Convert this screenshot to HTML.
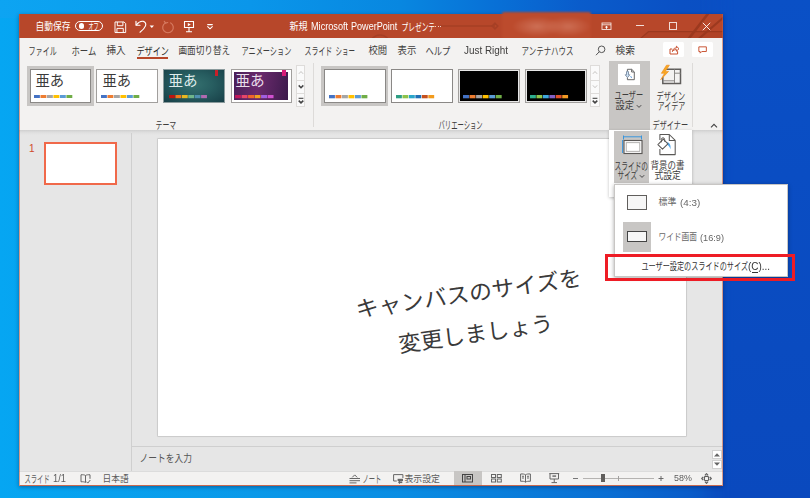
<!DOCTYPE html>
<html lang="ja"><head><meta charset="utf-8"><title>PowerPoint</title><style>
html,body{margin:0;padding:0;}
body{width:810px;height:498px;overflow:hidden;position:relative;font-family:"Liberation Sans",sans-serif;background:#0a62d0;}
#root{position:absolute;left:0;top:0;width:810px;height:498px;overflow:hidden;}
#root>div,#root>svg,#root>span{position:absolute;box-sizing:border-box;}
#desk{left:0;top:0;width:810px;height:498px;
 background:linear-gradient(90deg,#06a6f2 0px,#08a0ee 120px,#0a99e9 250px,#0a8de3 400px,#0a7cda 520px,#0a6ed3 610px,#0a5cc9 690px,#0a4abd 735px,#0a44b8 810px);}
#desktop-top{left:0;top:0;width:810px;height:18px;
 background:linear-gradient(90deg,#0da4f2 0px,#0b9fee 120px,#0a96ea 250px,#0887e0 400px,#086fd6 500px,#0a5ccb 580px,#0a50c4 680px,#0a4cc2 810px);}
#desktop-right{left:700px;top:0;width:110px;height:498px;
 background:linear-gradient(180deg,#0a50c6 0%,#0a4dc3 35%,#0a4bc0 70%,#0a49be 100%);
 -webkit-mask-image:linear-gradient(90deg,transparent 0px,#000 36px);mask-image:linear-gradient(90deg,transparent 0px,#000 36px);}
svg.t,svg.i{overflow:visible;display:block;}
svg.t text{font-family:"Liberation Sans","Noto Sans CJK JP",sans-serif;}
span.l{white-space:nowrap;display:block;}
</style></head>
<body><div id="root">
<div id="desk"></div><div id="desktop-top"></div><div id="desktop-right"></div>
<div style="left:19px;top:14px;width:704px;height:472px;background:#e6e6e6;box-shadow:0 1px 4px rgba(0,0,40,.38);"></div>
<div style="left:19px;top:14px;width:704px;height:24px;background:#b7472a;"></div>
<svg class="i" style="left:19px;top:14px;overflow:hidden" width="704" height="24" viewBox="0 0 704 24" ><g fill="none" stroke="#a53f25" stroke-width="1.6" opacity=".9"><path d="M421 12H476"/><path d="M476 9.2l2.8 2.8-2.8 2.8-2.8-2.800z"/><circle cx="361" cy="31" r="10"/><circle cx="403" cy="37" r="9"/></g><path d="M622 24.500L629.500 17.700H705V24.500z" fill="#8e3218" opacity=".16"/><g fill="none" stroke="#9a381e" opacity=".9"><path d="M621.500 24.500L629.500 17.700H705" stroke-width="1.200"/><path d="M669.500 25L689.500 -1" stroke-width="2.600"/><path d="M679.500 25L705 3" stroke-width="2.200"/></g></svg>
<div style="left:501.5px;top:12px;width:89px;height:26.6px;background:radial-gradient(ellipse 25px 10px at 35px 14.5px,rgba(216,134,110,.62),rgba(216,134,110,0) 100%),radial-gradient(ellipse 23px 10px at 66px 14.5px,rgba(216,134,110,.58),rgba(216,134,110,0) 100%),#bc4b2d;filter:blur(.8px);border-radius:2px;"></div>
<svg class="t" style="left:35.2px;top:20.12px" width="35.9" height="13.23" viewBox="0 0 35.9 13.23" role="img" aria-label="自動保存"><title>自動保存</title><text x="0.5" y="9.8" font-size="9.8" fill="#fff" textLength="34.9" lengthAdjust="spacingAndGlyphs">自動保存</text></svg>
<div style="left:75.4px;top:20.8px;width:27.8px;height:10.7px;border:1px solid #fff;border-radius:6px;"></div>
<div style="left:78.5px;top:23.4px;width:5.4px;height:5.4px;background:#fff;border-radius:50%;"></div>
<svg class="t" style="left:88.3px;top:21.37px" width="11.2" height="11.61" viewBox="0 0 11.2 11.61" role="img" aria-label="オフ"><title>オフ</title><text x="0.5" y="8.6" font-size="8.6" fill="#fff" textLength="10.2" lengthAdjust="spacingAndGlyphs">オフ</text></svg>
<svg class="i" style="left:113.7px;top:20.5px;" width="12.6" height="12.5" viewBox="0 0 13 13" ><g fill="none" stroke="#fff" stroke-width="1"><path d="M1 1h9.4l1.7 1.700v9.300H1z"/><path d="M3.400 1v3.900h5.800V1"/><path d="M3 12V7.700h6.600V12"/></g></svg>
<svg class="i" style="left:134px;top:20px;" width="21" height="14" viewBox="0 0 21 14" ><g fill="none" stroke="#fff" stroke-width="1.150" stroke-linecap="round" stroke-linejoin="round"><path d="M2 1.300v3.900h4"/><path d="M2.400 4.800C4.500 2.300 7.200.9 9.300 1.400c2 .5 3 2.300 2.200 4.500C10.600 8.300 8.500 10.400 6 12.200"/></g><path d="M15.600 5.600h4.400l-2.200 2.300z" fill="#fff"/></svg>
<svg class="i" style="left:161px;top:20px;" width="14" height="14" viewBox="0 0 14 14" ><g fill="none" stroke="#d67a60" stroke-width="1.200" stroke-linecap="round" stroke-linejoin="round"><path d="M9.700 2.900A5.300 5.300 0 1 1 4.300 2.900"/><path d="M3.300 1.300l1.300 1.800 2.100-.6"/></g></svg>
<svg class="i" style="left:183px;top:20px;" width="12" height="13" viewBox="0 0 12 13" ><g fill="none" stroke="#fff" stroke-width="1.1"><path d="M1 1.500h10M1.500 1.500v6h9v-6"/><path d="M6 7.500v4.100M3 11.700h6"/></g><path d="M4.800 2.900l3 1.700-3 1.700z" fill="#fff"/></svg>
<svg class="i" style="left:205.5px;top:23px;" width="8" height="7" viewBox="0 0 8 7" ><g fill="none" stroke="#fff" stroke-width="1.1" stroke-linecap="round"><path d="M1.700 1.600h4.600"/><path d="M1.700 3.700l2.300 2.100 2.300-2.100"/></g></svg>
<svg class="t" style="left:288.9px;top:20.12px" width="19.2" height="13.23" viewBox="0 0 19.2 13.23" role="img" aria-label="新規"><title>新規</title><text x="0.5" y="9.8" font-size="9.8" fill="#fff" textLength="18.2" lengthAdjust="spacingAndGlyphs">新規</text></svg>
<span class="l" style="left:310.5px;top:20.04px;font-size:10.5px;line-height:12.6px;color:#fff;font-weight:normal;transform:scaleX(0.8703);transform-origin:0 0;">Microsoft</span>
<span class="l" style="left:351.4px;top:20.04px;font-size:10.5px;line-height:12.6px;color:#fff;font-weight:normal;transform:scaleX(0.8631);transform-origin:0 0;">PowerPoint</span>
<svg class="t" style="left:400.6px;top:19.57px" width="34.6" height="14.43" viewBox="0 0 34.6 14.43" role="img" aria-label="プレゼンテ"><title>プレゼンテ</title><text x="0.5" y="10.69" font-size="10.69" fill="#fff" textLength="33.6" lengthAdjust="spacingAndGlyphs">プレゼンテ</text></svg>
<div style="left:435.4px;top:26px;width:1px;height:1px;background:#f0cfc6;"></div>
<div style="left:437.7px;top:26px;width:1px;height:1px;background:#f0cfc6;"></div>
<div style="left:440px;top:26px;width:1px;height:1px;background:#f0cfc6;"></div>
<svg class="i" style="left:601px;top:22px;" width="11" height="8.5" viewBox="0 0 11 8.500" ><g fill="none" stroke="#fff" stroke-opacity=".85" stroke-width=".9"><rect x="1" y="1" width="9" height="6.500"/><path d="M1 2.800h9"/></g><path d="M5.500 3.700l1.800 1.700h-1.300v1.300h-1v-1.300h-1.300z" fill="#fff"/></svg>
<div style="left:636px;top:25.2px;width:7.8px;height:1px;background:rgba(255,255,255,.82);"></div>
<div style="left:669.3px;top:22.2px;width:8px;height:7.6px;border:1px solid rgba(255,255,255,.8);"></div>
<svg class="i" style="left:702px;top:21.5px;" width="9" height="9" viewBox="0 0 9 9" ><path d="M.8.800l7.400 7.400M8.200.800L.8 8.200" stroke="#fff" stroke-opacity=".88" stroke-width="1" fill="none"/></svg>
<div style="left:19px;top:38px;width:704px;height:93px;background:#f3f2f1;"></div>
<svg class="t" style="left:27.8px;top:43.7px" width="29.3" height="14.58" viewBox="0 0 29.3 14.58" role="img" aria-label="ファイル"><title>ファイル</title><text x="0.5" y="10.8" font-size="10.8" fill="#3e3d3c" textLength="28.3" lengthAdjust="spacingAndGlyphs">ファイル</text></svg>
<svg class="t" style="left:71.3px;top:43.7px" width="25.8" height="14.58" viewBox="0 0 25.8 14.58" role="img" aria-label="ホーム"><title>ホーム</title><text x="0.5" y="10.8" font-size="10.8" fill="#3e3d3c" textLength="24.8" lengthAdjust="spacingAndGlyphs">ホーム</text></svg>
<svg class="t" style="left:106.2px;top:44.2px" width="20.2" height="13.5" viewBox="0 0 20.2 13.5" role="img" aria-label="挿入"><title>挿入</title><text x="0.5" y="10" font-size="10" fill="#3e3d3c" textLength="19.2" lengthAdjust="spacingAndGlyphs">挿入</text></svg>
<svg class="t" style="left:135.8px;top:43.7px" width="33.5" height="14.58" viewBox="0 0 33.5 14.58" role="img" aria-label="デザイン"><title>デザイン</title><text x="0.5" y="10.8" font-size="10.8" fill="#2b2a29" textLength="32.5" lengthAdjust="spacingAndGlyphs">デザイン</text></svg>
<div style="left:136.6px;top:57.2px;width:31.9px;height:1.8px;background:#b7472a;"></div>
<svg class="t" style="left:178.3px;top:44.2px" width="52.7" height="13.5" viewBox="0 0 52.7 13.5" role="img" aria-label="画面切り替え"><title>画面切り替え</title><text x="0.5" y="10" font-size="10" fill="#3e3d3c" textLength="51.7" lengthAdjust="spacingAndGlyphs">画面切り替え</text></svg>
<svg class="t" style="left:241.2px;top:43.7px" width="50.9" height="14.58" viewBox="0 0 50.9 14.58" role="img" aria-label="アニメーション"><title>アニメーション</title><text x="0.5" y="10.8" font-size="10.8" fill="#3e3d3c" textLength="49.9" lengthAdjust="spacingAndGlyphs">アニメーション</text></svg>
<svg class="t" style="left:304.3px;top:43.7px" width="28.8" height="14.58" viewBox="0 0 28.8 14.58" role="img" aria-label="スライド"><title>スライド</title><text x="0.5" y="10.8" font-size="10.8" fill="#3e3d3c" textLength="27.8" lengthAdjust="spacingAndGlyphs">スライド</text></svg>
<svg class="t" style="left:335.1px;top:43.7px" width="20.4" height="14.58" viewBox="0 0 20.4 14.58" role="img" aria-label="ショー"><title>ショー</title><text x="0.5" y="10.8" font-size="10.8" fill="#3e3d3c" textLength="19.4" lengthAdjust="spacingAndGlyphs">ショー</text></svg>
<svg class="t" style="left:368.3px;top:44.2px" width="19.7" height="13.5" viewBox="0 0 19.7 13.5" role="img" aria-label="校閲"><title>校閲</title><text x="0.5" y="10" font-size="10" fill="#3e3d3c" textLength="18.7" lengthAdjust="spacingAndGlyphs">校閲</text></svg>
<svg class="t" style="left:397.2px;top:44.2px" width="19.8" height="13.5" viewBox="0 0 19.8 13.5" role="img" aria-label="表示"><title>表示</title><text x="0.5" y="10" font-size="10" fill="#3e3d3c" textLength="18.8" lengthAdjust="spacingAndGlyphs">表示</text></svg>
<svg class="t" style="left:425.2px;top:43.7px" width="25.8" height="14.58" viewBox="0 0 25.8 14.58" role="img" aria-label="ヘルプ"><title>ヘルプ</title><text x="0.5" y="10.8" font-size="10.8" fill="#3e3d3c" textLength="24.8" lengthAdjust="spacingAndGlyphs">ヘルプ</text></svg>
<span class="l" style="left:463.5px;top:44.53px;font-size:10px;line-height:12px;color:#3e3d3c;font-weight:normal;transform:scaleX(0.9910);transform-origin:0 0;">Just Right</span>
<svg class="t" style="left:521.2px;top:43.7px" width="53.1" height="14.58" viewBox="0 0 53.1 14.58" role="img" aria-label="アンテナハウス"><title>アンテナハウス</title><text x="0.5" y="10.8" font-size="10.8" fill="#3e3d3c" textLength="52.1" lengthAdjust="spacingAndGlyphs">アンテナハウス</text></svg>
<svg class="i" style="left:595px;top:45px;" width="11" height="11" viewBox="0 0 11 11" ><g fill="none" stroke="#555" stroke-width="1"><circle cx="6.600" cy="4.300" r="3.300"/><path d="M4.300 6.700L1 10.200"/></g></svg>
<svg class="t" style="left:615px;top:44.2px" width="20.4" height="13.5" viewBox="0 0 20.4 13.5" role="img" aria-label="検索"><title>検索</title><text x="0.5" y="10" font-size="10" fill="#3e3d3c" textLength="19.4" lengthAdjust="spacingAndGlyphs">検索</text></svg>
<div style="left:663px;top:42px;width:21px;height:14.7px;background:#fff;border-radius:1.5px;"></div>
<div style="left:691.5px;top:42px;width:21.5px;height:14.7px;background:#fff;border-radius:1.5px;"></div>
<svg class="i" style="left:668px;top:44px;" width="12" height="11" viewBox="0 0 12 11" ><g fill="none" stroke="#c8502f" stroke-width="1" stroke-linejoin="round"><path d="M4.200 5H2v5h7.600V7.200"/><path d="M4.400 7.600c.2-2.200 1.500-3.600 4-3.700V2.200l2.600 2.500-2.600 2.500V5.600c-1.800 0-3 .5-4 2z"/></g></svg>
<svg class="i" style="left:698px;top:45.8px;" width="9.2" height="8.8" viewBox="0 0 11 10.500" ><g fill="none" stroke="#c8502f" stroke-width="1.150" stroke-linejoin="round"><path d="M1 1h9v5.600H4.500L2.600 8.500V6.600H1z"/></g></svg>
<div style="left:26.5px;top:66.3px;width:67.3px;height:40.2px;background:#c8c6c4;"></div>
<div style="left:29.7px;top:69.2px;width:61.5px;height:34.1px;background:#fff;border:1px solid #8a8886;"></div>
<svg class="t" style="left:34.7px;top:71.91px" width="29.7" height="19.58" viewBox="0 0 29.7 19.58" role="img" aria-label="亜あ"><title>亜あ</title><text x="0.5" y="14.5" font-size="14.5" fill="#3a3a3a" textLength="28.7" lengthAdjust="spacingAndGlyphs">亜あ</text></svg>
<svg class="i" style="left:34.4px;top:95.2px;" width="38.3" height="3" viewBox="0 0 38.3 3" ><rect x="0" y="0" width="5.88" height="3" fill="#4472c4"/><rect x="6.48" y="0" width="5.88" height="3" fill="#ed7d31"/><rect x="12.97" y="0" width="5.88" height="3" fill="#a5a5a5"/><rect x="19.45" y="0" width="5.88" height="3" fill="#ffc000"/><rect x="25.93" y="0" width="5.88" height="3" fill="#5b9bd5"/><rect x="32.42" y="0" width="5.88" height="3" fill="#70ad47"/></svg>
<div style="left:96.4px;top:69.2px;width:61.3px;height:34.1px;background:#fff;border:1px solid #a19f9d;"></div>
<svg class="t" style="left:101.6px;top:71.91px" width="29.7" height="19.58" viewBox="0 0 29.7 19.58" role="img" aria-label="亜あ"><title>亜あ</title><text x="0.5" y="14.5" font-size="14.5" fill="#3a3a3a" textLength="28.7" lengthAdjust="spacingAndGlyphs">亜あ</text></svg>
<svg class="i" style="left:101.3px;top:95.2px;" width="38.3" height="3" viewBox="0 0 38.3 3" ><rect x="0" y="0" width="5.88" height="3" fill="#4472c4"/><rect x="6.48" y="0" width="5.88" height="3" fill="#ed7d31"/><rect x="12.97" y="0" width="5.88" height="3" fill="#a5a5a5"/><rect x="19.45" y="0" width="5.88" height="3" fill="#ffc000"/><rect x="25.93" y="0" width="5.88" height="3" fill="#5b9bd5"/><rect x="32.42" y="0" width="5.88" height="3" fill="#70ad47"/></svg>
<div style="left:163.3px;top:69.2px;width:61.4px;height:34.1px;background:radial-gradient(ellipse at 50% 45%,#34706f 0%,#275d60 45%,#173f47 100%);border:1px solid #8a9a9c;"></div>
<div style="left:214.9px;top:70.2px;width:3.4px;height:5.6px;background:#c8202a;"></div>
<svg class="t" style="left:167.8px;top:71.91px" width="30.2" height="19.58" viewBox="0 0 30.2 19.58" role="img" aria-label="亜あ"><title>亜あ</title><text x="0.5" y="14.5" font-size="14.5" fill="#dfeceb" textLength="29.2" lengthAdjust="spacingAndGlyphs">亜あ</text></svg>
<svg class="i" style="left:168.8px;top:95px;" width="38" height="3.2" viewBox="0 0 38 3.2" ><rect x="0" y="0" width="5.83" height="3.2" fill="#c0140f"/><rect x="6.43" y="0" width="5.83" height="3.2" fill="#f07a1c"/><rect x="12.87" y="0" width="5.83" height="3.2" fill="#e8b820"/><rect x="19.3" y="0" width="5.83" height="3.2" fill="#6fb58a"/><rect x="25.73" y="0" width="5.83" height="3.2" fill="#4f8fb0"/><rect x="32.17" y="0" width="5.83" height="3.2" fill="#b06ab0"/></svg>
<div style="left:230.5px;top:69.2px;width:61.4px;height:34.1px;background:#fff;border:1px solid #a19f9d;"></div>
<div style="left:234px;top:72.2px;width:54.4px;height:27.8px;background:linear-gradient(100deg,#4a1f58 0%,#6a2a6c 45%,#3c1a4c 100%);"></div>
<div style="left:282px;top:70.2px;width:3.5px;height:5.6px;background:#d81b78;"></div>
<svg class="t" style="left:235.2px;top:71.91px" width="30.3" height="19.58" viewBox="0 0 30.3 19.58" role="img" aria-label="亜あ"><title>亜あ</title><text x="0.5" y="14.5" font-size="14.5" fill="#eadfea" textLength="29.3" lengthAdjust="spacingAndGlyphs">亜あ</text></svg>
<svg class="i" style="left:235.4px;top:95px;" width="38.6" height="3.2" viewBox="0 0 38.6 3.2" ><rect x="0" y="0" width="5.93" height="3.2" fill="#c2185b"/><rect x="6.53" y="0" width="5.93" height="3.2" fill="#e8456a"/><rect x="13.07" y="0" width="5.93" height="3.2" fill="#f0642c"/><rect x="19.6" y="0" width="5.93" height="3.2" fill="#f0a020"/><rect x="26.13" y="0" width="5.93" height="3.2" fill="#a060e0"/><rect x="32.67" y="0" width="5.93" height="3.2" fill="#d050d0"/></svg>
<div style="left:295.6px;top:64.8px;width:9.8px;height:42.6px;background:#fafafa;border:1px solid #dedcda;"></div>
<div style="left:295.6px;top:79.6px;width:9.8px;height:1px;background:#dedcda;"></div>
<div style="left:295.6px;top:93.2px;width:9.8px;height:1px;background:#dedcda;"></div>
<svg class="i" style="left:297.5px;top:70px;" width="6" height="5" viewBox="0 0 6 5" ><path d="M.9 3.800L3 1.500 5.100 3.800" fill="none" stroke="#c6c4c2" stroke-width="1"/></svg>
<svg class="i" style="left:297.5px;top:84.3px;" width="6" height="5" viewBox="0 0 6 5" ><path d="M.7 1.400L3 3.700 5.300 1.400" fill="none" stroke="#444" stroke-width="1.500"/></svg>
<svg class="i" style="left:297.5px;top:96.8px;" width="6" height="7.5" viewBox="0 0 6 7.500" ><path d="M.6 1.300h4.800" stroke="#444" stroke-width="1.100" fill="none"/><path d="M.7 3.600L3 5.900 5.300 3.600" fill="none" stroke="#444" stroke-width="1.500"/></svg>
<svg class="t" style="left:155px;top:118.1px" width="21.7" height="14.58" viewBox="0 0 21.7 14.58" role="img" aria-label="テーマ"><title>テーマ</title><text x="0.5" y="10.8" font-size="10.8" fill="#3e3d3c" textLength="20.7" lengthAdjust="spacingAndGlyphs">テーマ</text></svg>
<div style="left:313.3px;top:63px;width:1px;height:64px;background:#dddbd9;"></div>
<div style="left:321.3px;top:66.3px;width:66.9px;height:40.2px;background:#c8c6c4;"></div>
<div style="left:324.1px;top:69.2px;width:61.6px;height:34.1px;background:#fff;border:1px solid #8a8886;"></div>
<svg class="i" style="left:329.2px;top:95.2px;" width="38.4" height="3.3" viewBox="0 0 38.4 3.3" ><rect x="0" y="0" width="5.9" height="3.3" fill="#4472c4"/><rect x="6.5" y="0" width="5.9" height="3.3" fill="#ed7d31"/><rect x="13" y="0" width="5.9" height="3.3" fill="#a5a5a5"/><rect x="19.5" y="0" width="5.9" height="3.3" fill="#ffc000"/><rect x="26" y="0" width="5.9" height="3.3" fill="#5b9bd5"/><rect x="32.5" y="0" width="5.9" height="3.3" fill="#70ad47"/></svg>
<div style="left:391.3px;top:69.2px;width:61.4px;height:34.1px;background:#fff;border:1px solid #8a8886;"></div>
<svg class="i" style="left:396.2px;top:95.2px;" width="38.2" height="3.3" viewBox="0 0 38.2 3.3" ><rect x="0" y="0" width="5.87" height="3.3" fill="#2e9e83"/><rect x="6.47" y="0" width="5.87" height="3.3" fill="#8dc34a"/><rect x="12.93" y="0" width="5.87" height="3.3" fill="#2aa6ca"/><rect x="19.4" y="0" width="5.87" height="3.3" fill="#1f6fb5"/><rect x="25.87" y="0" width="5.87" height="3.3" fill="#c5501d"/><rect x="32.33" y="0" width="5.87" height="3.3" fill="#f29b1d"/></svg>
<div style="left:458.4px;top:69.2px;width:61.4px;height:34.1px;background:#000;border:1px solid #a19f9d;box-shadow:inset 0 0 0 1px #e8e8e8;"></div>
<svg class="i" style="left:463.2px;top:95.2px;" width="38.7" height="3.3" viewBox="0 0 38.7 3.3" ><rect x="0" y="0" width="5.95" height="3.3" fill="#4472c4"/><rect x="6.55" y="0" width="5.95" height="3.3" fill="#ed7d31"/><rect x="13.1" y="0" width="5.95" height="3.3" fill="#a5a5a5"/><rect x="19.65" y="0" width="5.95" height="3.3" fill="#ffc000"/><rect x="26.2" y="0" width="5.95" height="3.3" fill="#5b9bd5"/><rect x="32.75" y="0" width="5.95" height="3.3" fill="#70ad47"/></svg>
<div style="left:525px;top:69.2px;width:62px;height:34.1px;background:#000;border:1px solid #a19f9d;box-shadow:inset 0 0 0 1px #e8e8e8;"></div>
<svg class="i" style="left:530.4px;top:95.2px;" width="38.1" height="3.3" viewBox="0 0 38.1 3.3" ><rect x="0" y="0" width="5.85" height="3.3" fill="#2eae8d"/><rect x="6.45" y="0" width="5.85" height="3.3" fill="#8fc54b"/><rect x="12.9" y="0" width="5.85" height="3.3" fill="#3fa7dd"/><rect x="19.35" y="0" width="5.85" height="3.3" fill="#8360c6"/><rect x="25.8" y="0" width="5.85" height="3.3" fill="#e0502a"/><rect x="32.25" y="0" width="5.85" height="3.3" fill="#f29a24"/></svg>
<div style="left:590.4px;top:64.8px;width:9.8px;height:42.6px;background:#fafafa;border:1px solid #dedcda;"></div>
<div style="left:590.4px;top:79.6px;width:9.8px;height:1px;background:#dedcda;"></div>
<div style="left:590.4px;top:93.2px;width:9.8px;height:1px;background:#dedcda;"></div>
<svg class="i" style="left:592.3px;top:70px;" width="6" height="5" viewBox="0 0 6 5" ><path d="M.9 3.800L3 1.500 5.100 3.800" fill="none" stroke="#c6c4c2" stroke-width="1"/></svg>
<svg class="i" style="left:592.3px;top:84.3px;" width="6" height="5" viewBox="0 0 6 5" ><path d="M.9 1.400L3 3.700 5.100 1.400" fill="none" stroke="#c6c4c2" stroke-width="1"/></svg>
<svg class="i" style="left:592.3px;top:96.8px;" width="6" height="7.5" viewBox="0 0 6 7.500" ><path d="M.6 1.300h4.800" stroke="#444" stroke-width="1.100" fill="none"/><path d="M.7 3.600L3 5.900 5.300 3.600" fill="none" stroke="#444" stroke-width="1.500"/></svg>
<svg class="t" style="left:438.3px;top:118.1px" width="45.2" height="14.58" viewBox="0 0 45.2 14.58" role="img" aria-label="バリエーション"><title>バリエーション</title><text x="0.5" y="10.8" font-size="10.8" fill="#3e3d3c" textLength="44.2" lengthAdjust="spacingAndGlyphs">バリエーション</text></svg>
<div style="left:608.5px;top:61px;width:41.5px;height:68.5px;background:#c8c6c4;"></div>
<div style="left:618.3px;top:64px;width:22.1px;height:21.4px;background:#fff;"></div>
<svg class="i" style="left:623.5px;top:67.5px;" width="11" height="13" viewBox="0 0 11 13" ><g fill="none" stroke="#5a5a5a" stroke-width=".9" stroke-linejoin="round"><path d="M3.400 3.200V1.300h4.300l2.600 2.600v7.800H3.400v-2.200"/><path d="M7.600 1.400v2.600h2.600"/></g><path d="M2.500 3.600h2v3.200h1.300L3.500 9.600 1.200 6.800h1.300z" fill="#cfe3f7" stroke="#6b7f95" stroke-width=".8" stroke-linejoin="round"/><path d="M6.400 8.600l1.600.9" stroke="#3a86d6" stroke-width=".9" fill="none"/></svg>
<svg class="t" style="left:614.4px;top:88.1px" width="29.6" height="14.58" viewBox="0 0 29.6 14.58" role="img" aria-label="ユーザー"><title>ユーザー</title><text x="0.5" y="10.8" font-size="10.8" fill="#3e3d3c" textLength="28.6" lengthAdjust="spacingAndGlyphs">ユーザー</text></svg>
<svg class="t" style="left:615px;top:99px" width="19.5" height="13.5" viewBox="0 0 19.5 13.5" role="img" aria-label="設定"><title>設定</title><text x="0.5" y="10" font-size="10" fill="#3e3d3c" textLength="18.5" lengthAdjust="spacingAndGlyphs">設定</text></svg>
<svg class="i" style="left:636px;top:103.5px;" width="6" height="4.5" viewBox="0 0 6 4.500" ><path d="M.8 1.200L3 3.400 5.200 1.200" fill="none" stroke="#444" stroke-width="1"/></svg>
<svg class="i" style="left:659px;top:64.5px;" width="23" height="20.5" viewBox="0 0 23 20.500" ><g fill="none" stroke="#605e5c" stroke-width="1.500"><path d="M5.500 4.300H21.500V18.500H3.800V12"/></g><g fill="none" stroke="#8a8886" stroke-width="1"><path d="M15.500 4.500V18M15.500 8.200h6M4 15.800h11.500"/></g><path d="M7.500.2L2.300 8.300h3.200L1.700 14.800 9.600 6.400H6.300L10.400.2z" fill="#f7a823" stroke="#f08a1a" stroke-width=".6"/></svg>
<svg class="t" style="left:656.2px;top:88.7px" width="29.7" height="14.58" viewBox="0 0 29.7 14.58" role="img" aria-label="デザイン"><title>デザイン</title><text x="0.5" y="10.8" font-size="10.8" fill="#3e3d3c" textLength="28.7" lengthAdjust="spacingAndGlyphs">デザイン</text></svg>
<svg class="t" style="left:657px;top:98.8px" width="28.9" height="14.58" viewBox="0 0 28.9 14.58" role="img" aria-label="アイデア"><title>アイデア</title><text x="0.5" y="10.8" font-size="10.8" fill="#3e3d3c" textLength="27.9" lengthAdjust="spacingAndGlyphs">アイデア</text></svg>
<svg class="t" style="left:651.9px;top:117.6px" width="36.6" height="14.58" viewBox="0 0 36.6 14.58" role="img" aria-label="デザイナー"><title>デザイナー</title><text x="0.5" y="10.8" font-size="10.8" fill="#3e3d3c" textLength="35.6" lengthAdjust="spacingAndGlyphs">デザイナー</text></svg>
<div style="left:691.7px;top:63px;width:1px;height:64px;background:#dddbd9;"></div>
<svg class="i" style="left:709.5px;top:122.5px;" width="8" height="5.5" viewBox="0 0 8 5.500" ><path d="M1 4.300L4 1.300 7 4.300" fill="none" stroke="#444" stroke-width="1.100"/></svg>
<div style="left:19px;top:130.5px;width:704px;height:340.5px;background:#e6e6e6;"></div>
<div style="left:19px;top:129.8px;width:704px;height:5.2px;background:linear-gradient(180deg,#cfcfcf 0%,#d8d8d8 25%,#e1e1e1 60%,#e6e6e6 100%);"></div>
<span class="l" style="left:29px;top:142.5px;font-size:10px;line-height:12px;color:#d04a2a;">1</span>
<div style="left:44px;top:142.4px;width:73px;height:43px;background:#fff;border:2px solid #f0694a;"></div>
<div style="left:131.3px;top:133px;width:1px;height:338px;background:#cfcfcf;"></div>
<div style="left:157.6px;top:138.6px;width:528.6px;height:297.8px;background:#fff;box-shadow:0 0 0 .6px #c2c2c2,0 0 2px rgba(0,0,0,.15);"></div>
<div style="left:132.3px;top:446.2px;width:590.7px;height:1px;background:#cfcfcf;"></div>
<svg class="t" style="left:139.3px;top:452.19px" width="53.4" height="14.18" viewBox="0 0 53.4 14.18" role="img" aria-label="ノートを入力"><title>ノートを入力</title><text x="0.5" y="10.5" font-size="10.5" fill="#555" textLength="52.4" lengthAdjust="spacingAndGlyphs">ノートを入力</text></svg>
<div style="left:711.7px;top:450px;width:10px;height:8.8px;background:#fff;border:1px solid #d0d0d0;"></div>
<div style="left:711.7px;top:459.8px;width:10px;height:8.8px;background:#fff;border:1px solid #d0d0d0;"></div>
<svg class="i" style="left:713.7px;top:452.5px;" width="6" height="4" viewBox="0 0 6 4" ><path d="M0 3.600L3 .2 6 3.600z" fill="#666"/></svg>
<svg class="i" style="left:713.7px;top:462.3px;" width="6" height="4" viewBox="0 0 6 4" ><path d="M0 .4L3 3.800 6 .4z" fill="#666"/></svg>
<svg class="t" style="left:0;top:0" width="810" height="498" viewBox="0 0 810 498" role="img" aria-label="キャンバスのサイズを"><title>キャンバスのサイズを</title><g transform="translate(468.7 293.1) rotate(-8.1)"><text x="0" y="8.36" font-size="22" fill="#3a3a3a" text-anchor="middle" textLength="228" lengthAdjust="spacingAndGlyphs">キャンバスのサイズを</text></g></svg>
<svg class="t" style="left:0;top:0" width="810" height="498" viewBox="0 0 810 498" role="img" aria-label="変更しましょう"><title>変更しましょう</title><g transform="translate(475.7 333.2) rotate(-8.1)"><text x="0" y="8.36" font-size="22" fill="#3a3a3a" text-anchor="middle" textLength="156" lengthAdjust="spacingAndGlyphs">変更しましょう</text></g></svg>
<div style="left:19px;top:470.5px;width:704px;height:15.5px;background:#f3f2f1;border-top:1px solid #dcdcdc;"></div>
<svg class="t" style="left:24px;top:471.94px" width="26.2" height="14.29" viewBox="0 0 26.2 14.29" role="img" aria-label="スライド"><title>スライド</title><text x="0.5" y="10.58" font-size="10.58" fill="#5c5c5c" textLength="25.2" lengthAdjust="spacingAndGlyphs">スライド</text></svg>
<span class="l" style="left:52.8px;top:472.64px;font-size:10px;line-height:12px;color:#5c5c5c;font-weight:normal;transform:scaleX(0.9281);transform-origin:0 0;">1/1</span>
<svg class="i" style="left:80px;top:474px;" width="11" height="10" viewBox="0 0 11 10" ><g fill="none" stroke="#666" stroke-width="1"><path d="M5.500 1.500C4.500.8 2.800.6 1 .8v7c1.800-.2 3.500 0 4.500.7V1.500c1-.7 2.700-.9 4.500-.7v4"/><path d="M6.300 7.600l1.500 1.500L10.300 6"/></g></svg>
<svg class="t" style="left:101.9px;top:472.61px" width="27.1" height="12.83" viewBox="0 0 27.1 12.83" role="img" aria-label="日本語"><title>日本語</title><text x="0.5" y="9.5" font-size="9.5" fill="#5c5c5c" textLength="26.1" lengthAdjust="spacingAndGlyphs">日本語</text></svg>
<svg class="i" style="left:348.5px;top:473.5px;" width="11.5" height="9.5" viewBox="0 0 11.500 9.500" ><g fill="none" stroke="#666" stroke-width="1"><path d="M.5 4.500h10.500M.5 6.700h10.500M.5 8.900h7"/><path d="M3.200 3.400L5.700.9 8.200 3.400"/></g></svg>
<svg class="t" style="left:361.6px;top:471.94px" width="19.8" height="14.29" viewBox="0 0 19.8 14.29" role="img" aria-label="ノート"><title>ノート</title><text x="0.5" y="10.58" font-size="10.58" fill="#5c5c5c" textLength="18.8" lengthAdjust="spacingAndGlyphs">ノート</text></svg>
<svg class="i" style="left:393px;top:473.5px;" width="10.5" height="10" viewBox="0 0 10.500 10" ><g fill="none" stroke="#666" stroke-width="1"><path d="M3.800 7H.6V.6h9.300V4"/></g><g fill="#666"><rect x="4.600" y="4.800" width="5.400" height="2.200"/><rect x="5.300" y="7.400" width="4" height="1.700"/><rect x="6" y="5.200" width="1" height="4.500"/></g></svg>
<svg class="t" style="left:403.7px;top:472.61px" width="36.4" height="12.83" viewBox="0 0 36.4 12.83" role="img" aria-label="表示設定"><title>表示設定</title><text x="0.5" y="9.5" font-size="9.5" fill="#5c5c5c" textLength="35.4" lengthAdjust="spacingAndGlyphs">表示設定</text></svg>
<div style="left:453.5px;top:471px;width:28.5px;height:15px;background:#c8c6c4;"></div>
<svg class="i" style="left:462px;top:474px;" width="11" height="8.5" viewBox="0 0 11 8.500" ><g fill="none" stroke="#444" stroke-width="1"><rect x=".5" y=".5" width="10" height="7.500"/><path d="M3 .5v7.500"/><rect x="5" y="2.500" width="3.500" height="2.500"/></g></svg>
<svg class="i" style="left:491px;top:474px;" width="11" height="8.5" viewBox="0 0 11 8.500" ><g fill="none" stroke="#666" stroke-width="1"><rect x=".5" y=".5" width="4" height="3"/><rect x="6.300" y=".5" width="4" height="3"/><rect x=".5" y="5" width="4" height="3"/><rect x="6.300" y="5" width="4" height="3"/></g></svg>
<svg class="i" style="left:519.5px;top:472.8px;" width="11" height="10.2" viewBox="0 0 11 10.200" ><g fill="none" stroke="#666" stroke-width="1"><path d="M5.500 1.800C4.300 1 2.500.8.600 1v7.300c1.900-.2 3.700 0 4.900.8 1.200-.8 3-1 4.900-.8V1c-1.900-.2-3.700 0-4.900.8z"/><path d="M5.500 1.800v7.500M2 3.300h2M2 5h2M7 3.300h2M7 5h2"/></g></svg>
<svg class="i" style="left:549px;top:473px;" width="10.5" height="10.5" viewBox="0 0 10.500 10.500" ><g fill="none" stroke="#666" stroke-width="1"><path d="M.3.600h9.900M1 .6v5.400h8.500V.6"/><path d="M5.250 6v3.300M2.500 9.600h5.500"/></g><rect x="3.400" y="2.300" width="3.700" height="1.600" fill="#777"/></svg>
<div style="left:573.2px;top:477.8px;width:5.2px;height:1px;background:#777;"></div>
<div style="left:582.5px;top:478px;width:71.5px;height:1px;background:#b5b3b1;"></div>
<div style="left:618.4px;top:476.2px;width:0.8px;height:4.6px;background:#a3a1a0;"></div>
<div style="left:600.8px;top:473.5px;width:4px;height:8px;background:#605e5c;"></div>
<svg class="i" style="left:658px;top:476px;" width="6" height="5" viewBox="0 0 6 5" ><path d="M3 0v5M.5 2.500h5" stroke="#6a6a6a" stroke-width="1" fill="none"/></svg>
<span class="l" style="left:673.5px;top:472.35px;font-size:9.8px;line-height:11.76px;color:#5c5c5c;font-weight:normal;transform:scaleX(0.9082);transform-origin:0 0;">58%</span>
<svg class="i" style="left:700.5px;top:472.5px;" width="11" height="11" viewBox="0 0 11 11" ><g fill="none" stroke="#5e5e5e" stroke-width="1.150" stroke-linejoin="round"><rect x="3.400" y="3.400" width="4.200" height="4.200" rx="1.200"/><path d="M3.900 2.300L5.500.7 7.100 2.300M3.900 8.700l1.600 1.600L7.100 8.700M2.300 3.900L.7 5.500 2.300 7.100M8.700 3.900l1.600 1.600L8.700 7.100"/></g></svg>
<div style="left:19px;top:14px;width:704px;height:472px;border:1px solid rgba(200,90,60,.55);border-bottom-color:rgba(192,82,52,.85);border-top:none;pointer-events:none;"></div>
<div style="left:608.8px;top:130px;width:82.8px;height:67.3px;background:#fff;box-shadow:0 1px 3px rgba(0,0,0,.25);"></div>
<div style="left:614.1px;top:130.6px;width:34.9px;height:52.7px;background:#c8c6c4;"></div>
<svg class="i" style="left:620.5px;top:134.5px;" width="22.5" height="20" viewBox="0 0 22.500 20" ><g fill="none" stroke="#3a96dd" stroke-width="1"><path d="M2.500 .5v4M20.500 .5v4M2.500 1.800h18M1.600 5v13"/></g><rect x="3" y="5.500" width="18" height="13" fill="#fff" stroke="#5a5856" stroke-width="1.150"/><rect x="5.200" y="7.700" width="13.600" height="8.600" fill="#fff" stroke="#a19f9d" stroke-width=".8"/></svg>
<svg class="t" style="left:614.3px;top:158.5px" width="34.6" height="14.58" viewBox="0 0 34.6 14.58" role="img" aria-label="スライドの"><title>スライドの</title><text x="0.5" y="10.8" font-size="10.8" fill="#3e3d3c" textLength="33.6" lengthAdjust="spacingAndGlyphs">スライドの</text></svg>
<svg class="t" style="left:616.7px;top:168.2px" width="20.8" height="14.58" viewBox="0 0 20.8 14.58" role="img" aria-label="サイズ"><title>サイズ</title><text x="0.5" y="10.8" font-size="10.8" fill="#3e3d3c" textLength="19.8" lengthAdjust="spacingAndGlyphs">サイズ</text></svg>
<svg class="i" style="left:639px;top:173.5px;" width="6" height="4.5" viewBox="0 0 6 4.500" ><path d="M.8 1.200L3 3.400 5.200 1.200" fill="none" stroke="#444" stroke-width="1"/></svg>
<svg class="i" style="left:656.5px;top:134px;" width="20" height="21.5" viewBox="0 0 20 21.500" ><g fill="none" stroke="#5a5856" stroke-width="1.050" stroke-linejoin="round"><path d="M2.900 6V.5h9.400l5.900 5.900v14.200H2.900v-5.600"/><path d="M12.300.7v5.700h5.700"/></g><path d="M10 8.200c2.600.2 4.100 2.600 3.500 7.100-.8-2.600-2.300-4.400-4.700-5.500z" fill="#55a8ea"/><path d="M6.300 5.200l4.600 4.600-5.400 5.400L.9 10.600z" fill="#fff" stroke="#5a5856" stroke-width="1.050" stroke-linejoin="round"/><path d="M4.400 8.300V5.400a1.600 1.600 0 0 1 3.200 0v2.300" fill="none" stroke="#5a5856" stroke-width="1"/></svg>
<svg class="t" style="left:650.4px;top:159px" width="34.9" height="13.5" viewBox="0 0 34.9 13.5" role="img" aria-label="背景の書"><title>背景の書</title><text x="0.5" y="10" font-size="10" fill="#3e3d3c" textLength="33.9" lengthAdjust="spacingAndGlyphs">背景の書</text></svg>
<svg class="t" style="left:653.6px;top:168.7px" width="27.4" height="13.5" viewBox="0 0 27.4 13.5" role="img" aria-label="式設定"><title>式設定</title><text x="0.5" y="10" font-size="10" fill="#3e3d3c" textLength="26.4" lengthAdjust="spacingAndGlyphs">式設定</text></svg>
<div style="left:614.3px;top:184.2px;width:173.7px;height:93.2px;background:#fff;box-shadow:0 1px 4px rgba(0,0,0,.35);border:1px solid #c8c6c4;"></div>
<div style="left:627.2px;top:195.2px;width:20px;height:14.4px;background:#f6f6f6;border:1px solid #605e5c;"></div>
<svg class="t" style="left:658.1px;top:196.41px" width="18.9" height="12.83" viewBox="0 0 18.9 12.83" role="img" aria-label="標準"><title>標準</title><text x="0.5" y="9.5" font-size="9.5" fill="#666" textLength="17.9" lengthAdjust="spacingAndGlyphs">標準</text></svg>
<span class="l" style="left:679.5px;top:196.73px;font-size:9.5px;line-height:11.4px;color:#666;font-weight:normal;transform:scaleX(1.0373);transform-origin:0 0;">(4:3)</span>
<div style="left:622.8px;top:222.2px;width:28.6px;height:29.4px;background:#c8c6c4;"></div>
<div style="left:627.2px;top:230.7px;width:20px;height:11.8px;background:#f6f6f6;border:1px solid #444;"></div>
<svg class="t" style="left:658.1px;top:231.41px" width="39.4" height="12.83" viewBox="0 0 39.4 12.83" role="img" aria-label="ワイド画面"><title>ワイド画面</title><text x="0.5" y="9.5" font-size="9.5" fill="#666" textLength="38.4" lengthAdjust="spacingAndGlyphs">ワイド画面</text></svg>
<span class="l" style="left:700px;top:231.73px;font-size:9.5px;line-height:11.4px;color:#666;font-weight:normal;transform:scaleX(0.9679);transform-origin:0 0;">(16:9)</span>
<svg class="t" style="left:641px;top:260.2px" width="107.5" height="13.5" viewBox="0 0 107.5 13.5" role="img" aria-label="ユーザー設定のスライドのサイズ"><title>ユーザー設定のスライドのサイズ</title><text x="0.5" y="10" font-size="10" fill="#333" textLength="106.5" lengthAdjust="spacingAndGlyphs">ユーザー設定のスライドのサイズ</text></svg>
<span class="l" style="left:747.8px;top:260.54px;font-size:10px;line-height:12px;color:#333;font-weight:normal;transform:scaleX(0.9910);transform-origin:0 0;">(C)...</span>
<div style="left:752.3px;top:272px;width:5.5px;height:0.8px;background:#333;"></div>
<div style="left:604.7px;top:254px;width:189.9px;height:27.4px;border:3px solid #ee1c25;"></div>
</div></body></html>
